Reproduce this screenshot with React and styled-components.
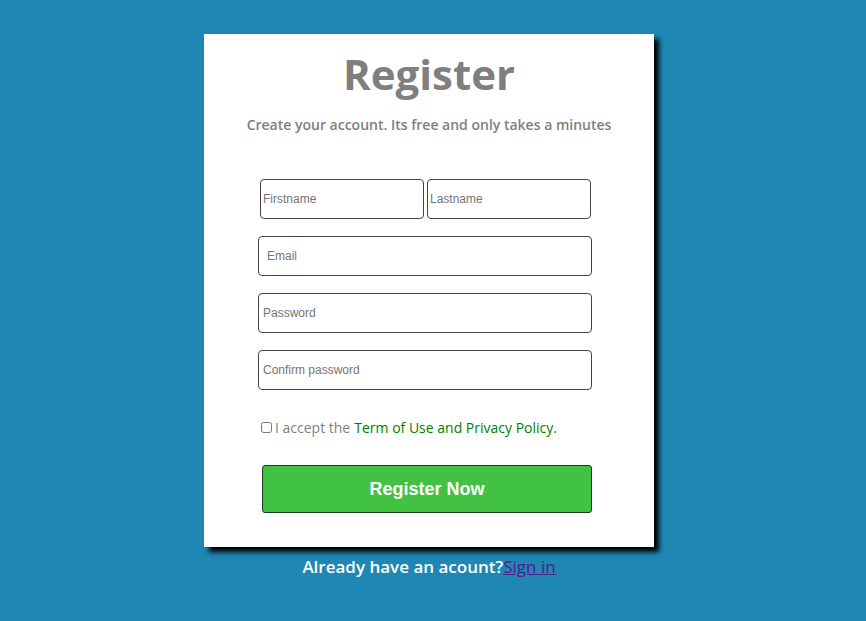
import React from 'react';
import styled, { createGlobalStyle } from 'styled-components';

const GlobalStyle = createGlobalStyle`
    html, body {
        margin: 0;
        padding: 0;
        background-color: #1f87b3;
    }
`;

const Page = styled.div`
    min-height: 100vh;
    padding: 34px 8px 0 0;
    box-sizing: border-box;
    background-color: #1f87b3;
    font-family: "Open Sans", "Liberation Sans", sans-serif;
`;

const Card = styled.div`
    width: 450px;
    height: 513px;
    margin: 0 auto;
    background-color: #fff;
    box-shadow: 5px 5px 5px #000;
    display: flex;
    flex-direction: column;
    align-items: center;
`;

const Title = styled.h1`
    margin: 14px 0 0 0;
    height: 52px;
    line-height: 52px;
    font-size: 42px;
    font-weight: 700;
    color: #7f7f7f;
`;

const Subtitle = styled.p`
    margin: 16px 0 0 0;
    height: 18px;
    line-height: 18px;
    font-size: 14px;
    font-weight: 600;
    color: #7f7f7f;
`;

const Form = styled.form`
    width: 334px;
    margin: 45px 0 0 54px;
    align-self: flex-start;
    display: flex;
    flex-direction: column;
`;

const NameRow = styled.div`
    display: flex;
    gap: 3px;
    padding: 0 1px 0 2px;
    margin-bottom: 17px;
`;

const Input = styled.input`
    box-sizing: border-box;
    width: 100%;
    min-width: 0;
    height: 40px;
    margin: 0 0 ${p => (p.$last ? 0 : 17)}px 0;
    padding: 0 0 0 ${p => p.$pad || 3}px;
    border: 1px solid #444;
    border-radius: 4px;
    background: #fff;
    font-family: "Liberation Sans", Arial, sans-serif;
    font-size: 12px;
    color: #333;

    &::placeholder {
        color: #757575;
    }
`;

const HalfInput = styled(Input)`
    flex: 1;
    margin: 0;
`;

const CheckRow = styled.label`
    display: flex;
    align-items: center;
    margin: 28px 0 0 3px;
    height: 18px;
    font-size: 14px;
    color: #7f7f7f;

    & > input {
        width: 11px;
        height: 11px;
        margin: 0 3px 0 0;
    }

    & > span {
        color: #008000;
        margin-left: 4px;
    }
`;

const Button = styled.button`
    box-sizing: border-box;
    width: 330px;
    height: 48px;
    margin: 29px 0 0 4px;
    background-color: #42c242;
    border: 1px solid #1e3a1e;
    border-radius: 3px;
    color: #fff;
    font-family: "Liberation Sans", Arial, sans-serif;
    font-size: 18px;
    font-weight: 700;
    cursor: pointer;
`;

const Footer = styled.p`
    margin: 8px 0 0 0;
    text-align: center;
    font-size: 17px;
    font-weight: 600;
    color: #fff;
    line-height: 24px;

    & > a {
        color: #551a8b;
        font-weight: 400;
    }
`;

const App = () => {
    return (
        <>
            <GlobalStyle />
            <Page>
                <Card>
                    <Title>Register</Title>
                    <Subtitle>Create your account. Its free and only takes a minutes</Subtitle>
                    <Form onSubmit={e => e.preventDefault()}>
                        <NameRow>
                            <HalfInput type="text" placeholder="Firstname" $pad={2} />
                            <HalfInput type="text" placeholder="Lastname" $pad={2} />
                        </NameRow>
                        <Input type="email" placeholder="Email" $pad={8} />
                        <Input type="password" placeholder="Password" $pad={4} />
                        <Input type="password" placeholder="Confirm password" $pad={4} $last />
                        <CheckRow>
                            <input type="checkbox" />
                            I accept the<span>Term of Use and Privacy Policy.</span>
                        </CheckRow>
                        <Button type="submit">Register Now</Button>
                    </Form>
                </Card>
                <Footer>
                    Already have an acount?<a href="#signin">Sign in</a>
                </Footer>
            </Page>
        </>
    );
};

export default App;
